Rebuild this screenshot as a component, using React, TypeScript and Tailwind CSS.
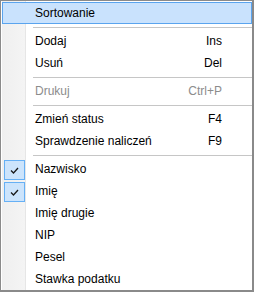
import { ReactNode } from 'react';

interface MenuItem {
  label: string;
  shortcut?: string;
  checked?: boolean;
  disabled?: boolean;
  active?: boolean;
}

type Entry = MenuItem | 'sep';

const entries: Entry[] = [
  { label: 'Sortowanie', active: true },
  'sep',
  { label: 'Dodaj', shortcut: 'Ins' },
  { label: 'Usuń', shortcut: 'Del' },
  'sep',
  { label: 'Drukuj', shortcut: 'Ctrl+P', disabled: true },
  'sep',
  { label: 'Zmień status', shortcut: 'F4' },
  { label: 'Sprawdzenie naliczeń', shortcut: 'F9' },
  'sep',
  { label: 'Nazwisko', checked: true },
  { label: 'Imię', checked: true },
  { label: 'Imię drugie' },
  { label: 'NIP' },
  { label: 'Pesel' },
  { label: 'Stawka podatku' },
];

const CheckMark = () => (
  <svg width="9" height="7" viewBox="0 0 9 7" className="block">
    <path d="M1 3.5 L3.5 6 L8 1" fill="none" stroke="#1a1a1a" strokeWidth="1.3" />
  </svg>
);

const Row = ({ item }: { item: MenuItem }) => {
  let check: ReactNode = null;
  if (item.checked) {
    check = (
      <div className="absolute left-[1px] top-[1px] w-[21px] h-[20px] border border-[#66b0f5] bg-[#cce4fc] flex items-center justify-center">
        <CheckMark />
      </div>
    );
  }

  return (
    <div
      className={`relative h-[22px] flex items-center ${
        item.active ? 'border border-[#5aa4ee] bg-[#c9e2fd]' : 'border border-transparent'
      }`}
    >
      {check}
      <span
        className={`pl-[32px] flex-1 ${item.disabled ? 'text-[#8c8c8c]' : 'text-black'}`}
      >
        {item.label}
      </span>
      {item.shortcut && (
        <span className={`pr-[29px] ${item.disabled ? 'text-[#8c8c8c]' : 'text-black'}`}>
          {item.shortcut}
        </span>
      )}
    </div>
  );
};

export default function App() {
  return (
    <div
      className="w-[254px] h-[292px] bg-white border-t border-l border-r-2 border-b-2 border-[#8a8a8a] pt-[1px] pl-[1px] relative text-[12px]"
      style={{ fontFamily: '"Liberation Sans", Arial, sans-serif' }}
    >
      {/* gutter */}
      <div className="absolute left-[1px] top-0 bottom-0 w-[24px] bg-gradient-to-r from-[#efefef] to-[#f4f4f4] border-r border-[#e6e6e6]" />
      <div className="relative flex flex-col">
        {entries.map((e, i) =>
          e === 'sep' ? (
            <div key={i} className="h-[6px] flex items-center pl-[31px]">
              <div className="h-px w-full bg-[#c6c6c6]" />
            </div>
          ) : (
            <Row key={i} item={e} />
          )
        )}
      </div>
    </div>
  );
}
